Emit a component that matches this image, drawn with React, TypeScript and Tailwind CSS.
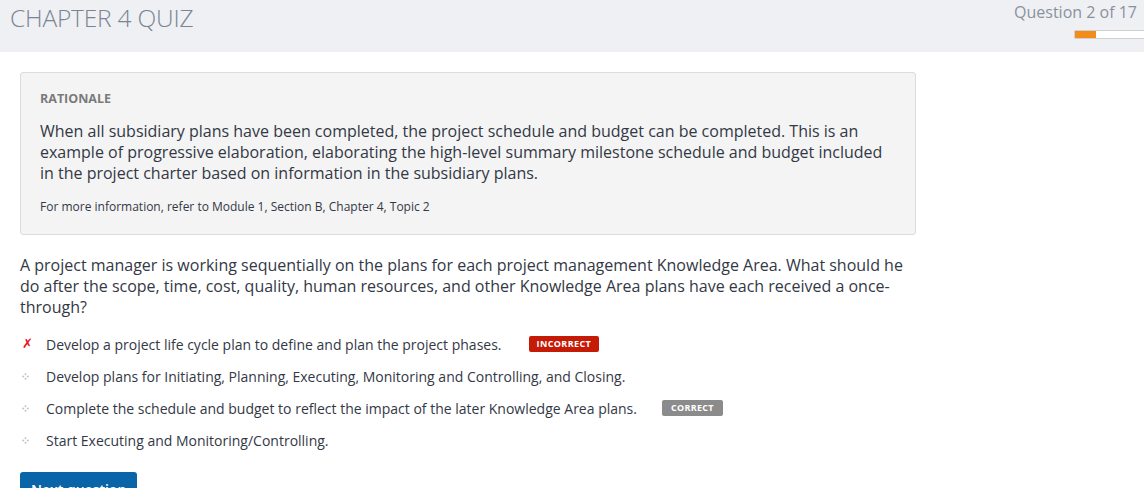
import React from 'react';

const options = [
  { text: 'Develop a project life cycle plan to define and plan the project phases.', mark: 'wrong', badge: 'INCORRECT' },
  { text: 'Develop plans for Initiating, Planning, Executing, Monitoring and Controlling, and Closing.' },
  { text: 'Complete the schedule and budget to reflect the impact of the later Knowledge Area plans.', badge: 'CORRECT' },
  { text: 'Start Executing and Monitoring/Controlling.' },
];

function Bullet() {
  return (
    <svg width="7" height="7" viewBox="0 0 7 7" className="text-[#c4c4c4]">
      <circle cx="3.5" cy="1.2" r="1" fill="currentColor" />
      <circle cx="3.5" cy="5.8" r="1" fill="currentColor" />
      <circle cx="1.2" cy="3.5" r="1" fill="currentColor" />
      <circle cx="5.8" cy="3.5" r="1" fill="currentColor" />
    </svg>
  );
}

export default function App() {
  return (
    <div className="w-[1144px] h-[488px] overflow-hidden bg-white font-['Open_Sans',sans-serif] text-[#333845]">
      {/* Header */}
      <div className="h-[52px] bg-[#eff0f4] flex justify-between">
        <h1 className="pl-[10px] pt-[1px] text-[24.5px] font-light text-[#7b8591] leading-[34px] tracking-[-0.2px]">
          CHAPTER 4 QUIZ
        </h1>
        <div className="flex flex-col items-end pt-[1px]">
          <span className="pr-[7px] text-[16px] leading-[22px] text-[#8a929c]">Question 2 of 17</span>
          <div className="mt-[7px] w-[70px] h-[9px] bg-white border border-[#d0d0d0] border-r-0 rounded-l-[2px] flex">
            <div className="w-[21px] h-full bg-[#f28c1a]" />
          </div>
        </div>
      </div>

      <div className="px-5 pt-5">
        {/* Rationale */}
        <div className="w-[896px] bg-[#f4f4f4] border border-[#dcdcdc] rounded-[3px] px-[19px] pt-[18px] pb-[19px]">
          <div className="text-[12.5px] font-bold text-[#7a7a7a] leading-4">RATIONALE</div>
          <p className="mt-[14px] text-[16px] leading-[21px]">
            When all subsidiary plans have been completed, the project schedule and budget can be completed. This is an
            example of progressive elaboration, elaborating the high-level summary milestone schedule and budget included
            in the project charter based on information in the subsidiary plans.
          </p>
          <p className="mt-[15px] text-[12px] leading-4">For more information, refer to Module 1, Section B, Chapter 4, Topic 2</p>
        </div>

        {/* Question */}
        <p className="mt-[20px] w-[890px] text-[16px] leading-[21px]">
          A project manager is working sequentially on the plans for each project management Knowledge Area. What should he
          do after the scope, time, cost, quality, human resources, and other Knowledge Area plans have each received a once-
          through?
        </p>

        <ul className="mt-[16px] flex flex-col gap-[12px]">
          {options.map((o, i) => (
            <li key={i} className="flex items-center h-[20px] text-[14px]">
              <span className="w-[26px] flex items-center pl-[2px]">
                {o.mark === 'wrong' ? (
                  <span className="text-[#e5141a] text-[13px] font-bold italic font-['DejaVu_Sans',sans-serif]">✗</span>
                ) : (
                  <Bullet />
                )}
              </span>
              <span>{o.text}</span>
              {o.badge && (
                <span
                  className={
                    o.badge === 'INCORRECT'
                      ? 'ml-[27px] px-[8px] h-4 leading-4 rounded-[2px] bg-[#c41a06] text-white text-[9px] font-bold tracking-[0.4px]'
                      : 'ml-[25px] px-[9px] h-4 leading-4 rounded-[2px] bg-[#8b8b8b] text-white text-[9px] font-bold tracking-[0.3px]'
                  }
                >
                  {o.badge}
                </span>
              )}
            </li>
          ))}
        </ul>

        <button className="mt-[22px] px-[11px] h-[34px] bg-[#0a64a8] text-white text-[14px] font-semibold rounded-[3px]">
          Next question
        </button>
      </div>
    </div>
  );
}
